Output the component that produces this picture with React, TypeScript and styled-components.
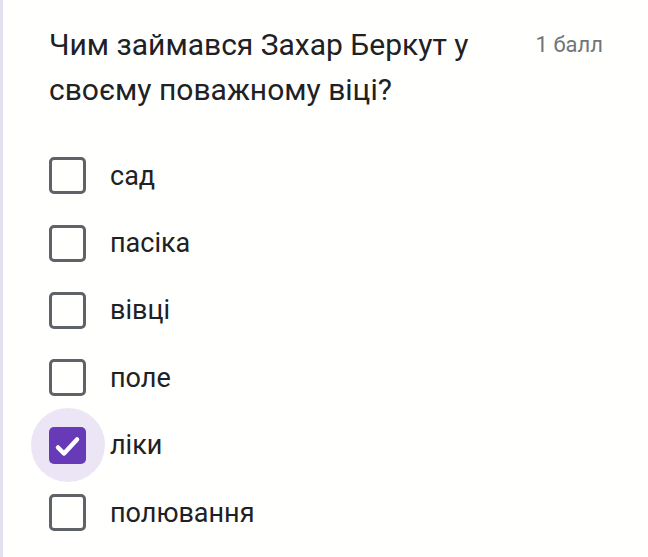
import React from "react";
import styled, { createGlobalStyle } from "styled-components";

const Global = createGlobalStyle`
  html, body { margin: 0; padding: 0; background: #ffffff; }
  body { font-family: Roboto, "Noto Sans", sans-serif; }
`;

const Page = styled.div`
  width: 648px;
  height: 557px;
  box-sizing: border-box;
  border-left: 3px solid #e3dfee;
  padding: 22px 45px 0 46px;
  background: #fffffe;
  overflow: hidden;
`;

const Header = styled.div`
  display: flex;
  justify-content: space-between;
  align-items: flex-start;
`;

const Question = styled.div`
  font-size: 30px;
  line-height: 45px;
  color: #202124;
  max-width: 450px;
`;

const Points = styled.div`
  font-size: 22px;
  line-height: 45px;
  color: #70757a;
  white-space: nowrap;
`;

const List = styled.div`
  margin-top: 30px;
  display: flex;
  flex-direction: column;
`;

const Row = styled.div`
  height: 67.4px;
  display: flex;
  align-items: center;
  gap: 24px;
`;

const BoxWrap = styled.div`
  position: relative;
  width: 37px;
  height: 37px;
  flex: none;
`;

const Halo = styled.div`
  position: absolute;
  left: 50%;
  top: 50%;
  width: 74px;
  height: 74px;
  margin: -37px 0 0 -37px;
  border-radius: 50%;
  background: #ebe5f5;
`;

const Box = styled.div<{ $checked: boolean }>`
  position: relative;
  box-sizing: border-box;
  width: 37px;
  height: 37px;
  border-radius: 5px;
  border: ${(p) => (p.$checked ? "none" : "3.5px solid #5f6368")};
  background: ${(p) => (p.$checked ? "#673ab7" : "transparent")};
`;

const Check = styled.svg`
  display: block;
`;

const Label = styled.span`
  font-size: 27px;
  color: #202124;
`;

const options = [
  { text: "сад", checked: false },
  { text: "пасіка", checked: false },
  { text: "вівці", checked: false },
  { text: "поле", checked: false },
  { text: "ліки", checked: true },
  { text: "полювання", checked: false },
];

export default function App() {
  return (
    <Page>
      <Global />
      <Header>
        <Question>Чим займався Захар Беркут у своєму поважному віці?</Question>
        <Points>1 балл</Points>
      </Header>
      <List>
        {options.map((o) => (
          <Row key={o.text}>
            <BoxWrap>
              {o.checked && <Halo />}
              <Box $checked={o.checked}>
                {o.checked && (
                  <Check width="37" height="37" viewBox="0 0 37 37">
                    <path d="M9 20.5l6 6 13-14" fill="none" stroke="#fff" strokeWidth="4.5" strokeLinecap="round" strokeLinejoin="round" />
                  </Check>
                )}
              </Box>
            </BoxWrap>
            <Label>{o.text}</Label>
          </Row>
        ))}
      </List>
    </Page>
  );
}
